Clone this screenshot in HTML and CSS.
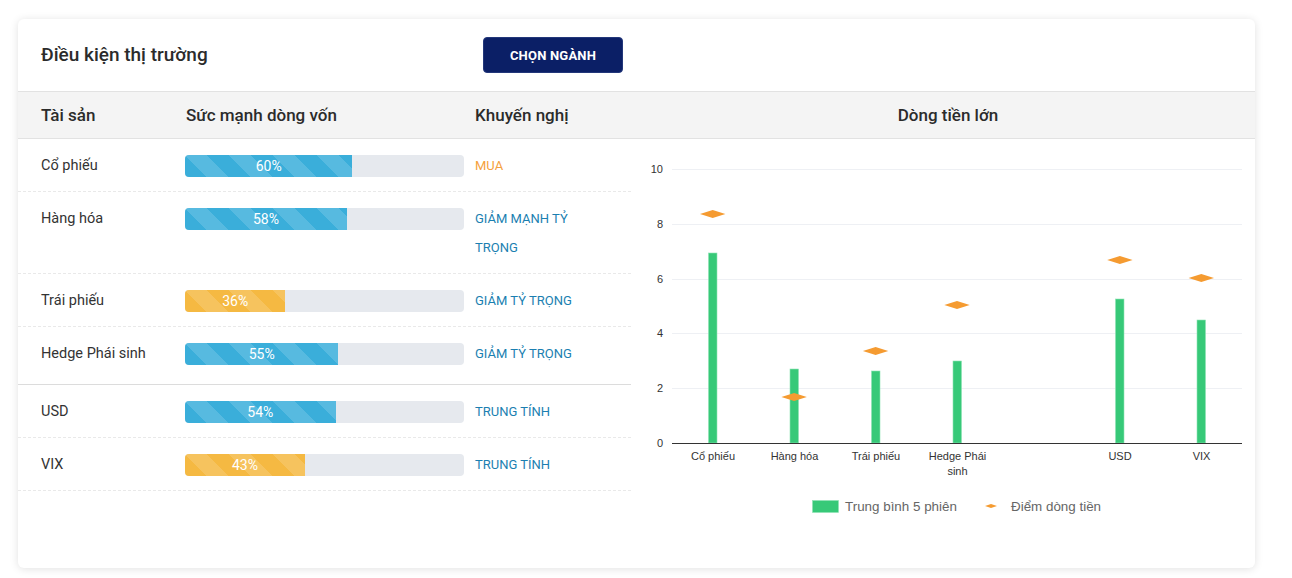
FILE: index.html
```html
<!DOCTYPE html>
<html lang="vi">
<head>
<meta charset="utf-8">
<title>Điều kiện thị trường</title>
<link rel="stylesheet" href="styles.css">
</head>
<body>
<div class="card">
  <div class="card-head">
    <h2 class="title">Điều kiện thị trường</h2>
    <button class="btn">CHỌN NGÀNH</button>
  </div>
  <div class="thead">
    <div class="th th-asset">Tài sản</div>
    <div class="th th-strength">Sức mạnh dòng vốn</div>
    <div class="th th-rec">Khuyến nghị</div>
    <div class="th th-chart">Dòng tiền lớn</div>
  </div>
  <div class="body">
    <div class="table">
      <div class="row">
        <div class="asset">Cổ phiếu</div>
        <div class="bar-cell"><div class="bar"><div class="fill blue" style="width:60%"><span>60%</span></div></div></div>
        <div class="rec buy">MUA</div>
      </div>
      <div class="row">
        <div class="asset">Hàng hóa</div>
        <div class="bar-cell"><div class="bar"><div class="fill blue" style="width:58%"><span>58%</span></div></div></div>
        <div class="rec">GIẢM MẠNH TỶ TRỌNG</div>
      </div>
      <div class="row">
        <div class="asset">Trái phiếu</div>
        <div class="bar-cell"><div class="bar"><div class="fill orange" style="width:36%"><span>36%</span></div></div></div>
        <div class="rec">GIẢM TỶ TRỌNG</div>
      </div>
      <div class="row row-group-end">
        <div class="asset">Hedge Phái sinh</div>
        <div class="bar-cell"><div class="bar"><div class="fill blue" style="width:55%"><span>55%</span></div></div></div>
        <div class="rec">GIẢM TỶ TRỌNG</div>
      </div>
      <div class="row">
        <div class="asset">USD</div>
        <div class="bar-cell"><div class="bar"><div class="fill blue" style="width:54%"><span>54%</span></div></div></div>
        <div class="rec">TRUNG TÍNH</div>
      </div>
      <div class="row">
        <div class="asset">VIX</div>
        <div class="bar-cell"><div class="bar"><div class="fill orange" style="width:43%"><span>43%</span></div></div></div>
        <div class="rec">TRUNG TÍNH</div>
      </div>
    </div>
    <div class="chart">
      <svg class="chart-svg" width="624" height="400" viewBox="0 0 624 400">
        <g class="grid">
          <line x1="41" x2="611" y1="30.5" y2="30.5"/>
          <line x1="41" x2="611" y1="85.5" y2="85.5"/>
          <line x1="41" x2="611" y1="140.5" y2="140.5"/>
          <line x1="41" x2="611" y1="194.5" y2="194.5"/>
          <line x1="41" x2="611" y1="249.5" y2="249.5"/>
        </g>
        <g class="ylab">
          <text x="32" y="34">10</text>
          <text x="32" y="89">8</text>
          <text x="32" y="144">6</text>
          <text x="32" y="198">4</text>
          <text x="32" y="253">2</text>
          <text x="32" y="308">0</text>
        </g>
        <g class="bars">
          <rect x="77.5" y="114" width="8.5" height="190"/>
          <rect x="159" y="230" width="8.5" height="74"/>
          <rect x="240.5" y="232" width="8.5" height="72"/>
          <rect x="322" y="222" width="8.5" height="82"/>
          <rect x="484.5" y="160" width="8.5" height="144"/>
          <rect x="566" y="181" width="8.5" height="123"/>
        </g>
        <line class="axis" x1="41" x2="611" y1="304.5" y2="304.5"/>
        <g class="pts">
          <polygon points="69,75 81.7,71 94.4,75 81.7,79"/>
          <polygon points="150.4,258 163.1,254 175.8,258 163.1,262"/>
          <polygon points="231.9,212 244.6,208 257.3,212 244.6,216"/>
          <polygon points="313.3,166 326,162 338.7,166 326,170"/>
          <polygon points="476.2,121 488.9,117 501.6,121 488.9,125"/>
          <polygon points="557.6,139 570.3,135 583,139 570.3,143"/>
        </g>
        <g class="xlab">
          <text x="82" y="321">Cổ phiếu</text>
          <text x="163.5" y="321">Hàng hóa</text>
          <text x="245" y="321">Trái phiếu</text>
          <text x="326.5" y="321">Hedge Phái</text>
          <text x="326.5" y="336">sinh</text>
          <text x="489" y="321">USD</text>
          <text x="570.5" y="321">VIX</text>
        </g>
        <g class="legend">
          <rect class="lg-bar" x="181.5" y="361.5" width="26" height="12"/>
          <text x="214" y="372">Trung bình 5 phiên</text>
          <polygon class="lg-pt" points="354,367 360,365 366,367 360,369"/>
          <text x="380" y="372">Điểm dòng tiền</text>
        </g>
      </svg>
    </div>
  </div>
</div>
</body>
</html>
```
FILE: styles.css
```css
* { box-sizing: border-box; }
html, body { margin: 0; padding: 0; background: #ffffff; }
body {
  font-family: Roboto, "Liberation Sans", Arial, sans-serif;
  color: #333;
  padding: 19px 37px 10px 18px;
}
.card {
  width: 1237px;
  height: 549px;
  background: #fff;
  border-radius: 6px;
  box-shadow: 0 1px 8px rgba(0, 0, 0, 0.12);
  overflow: hidden;
}
.card-head {
  height: 73px;
  display: grid;
  grid-template-columns: 442px auto;
  align-items: center;
  padding-left: 23px;
  border-bottom: 1px solid #e2e2e2;
}
.title {
  margin: 0;
  font-size: 19px;
  font-weight: 500;
  color: #2b2b2b;
  line-height: 24px;
  padding-bottom: 1px;
}
.btn {
  justify-self: start;
  width: 140px;
  height: 36px;
  margin-top: 0;
  background: #0b1f66;
  color: #fff;
  border: 1px solid #23377a;
  border-radius: 4px;
  font-family: Roboto, "Liberation Sans", sans-serif;
  font-size: 13px;
  font-weight: 700;
  letter-spacing: 0.2px;
  cursor: pointer;
}
.thead {
  height: 47px;
  background: #f4f4f4;
  border-bottom: 1px solid #e2e2e2;
  display: grid;
  grid-template-columns: 167px 290px 156px 624px;
  align-items: center;
}
.th {
  font-size: 17px;
  font-weight: 500;
  color: #2b2b2b;
}
.th-asset { padding-left: 23px; }
.th-strength { padding-left: 1px; }
.th-chart { text-align: center; padding-left: 10px; }

.body {
  display: grid;
  grid-template-columns: 613px 624px;
}
.table { display: flex; flex-direction: column; }
.row {
  display: grid;
  grid-template-columns: 167px 290px 156px;
  align-items: start;
  padding: 12px 0 11px;
  border-bottom: 1px dashed #e9e9e9;
  line-height: 29px;
}
.row-group-end {
  padding-bottom: 16px;
  border-bottom: 1px solid #dcdcdc;
}
.asset {
  padding-left: 23px;
  font-size: 14.5px;
  color: #333;
}
.bar-cell {
  height: 29px;
  display: flex;
  align-items: center;
}
.bar {
  width: 279px;
  height: 22px;
  background: #e6e9ee;
  border-radius: 4px;
  overflow: hidden;
}
.fill {
  height: 100%;
  display: flex;
  align-items: center;
  justify-content: center;
  color: #fff;
  font-size: 14px;
  font-weight: 400;
  background-size: 44px 44px;
  background-image: linear-gradient(45deg,
    rgba(255,255,255,0.15) 25%, transparent 25%, transparent 50%,
    rgba(255,255,255,0.15) 50%, rgba(255,255,255,0.15) 75%, transparent 75%, transparent);
}
.fill span { line-height: 22px; }
.fill.blue { background-color: #3aaeda; }
.fill.orange { background-color: #f5b942; }
.rec {
  font-size: 13px;
  color: #1b7fb1;
  padding-right: 28px;
}
.rec.buy { color: #f5a13c; }

.chart { position: relative; }
.chart-svg { display: block; font-family: "Liberation Sans", Arial, sans-serif; }
.grid line { stroke: #eef0f4; stroke-width: 1; }
.axis { stroke: #333; stroke-width: 1; }
.ylab text { font-size: 11px; fill: #333; text-anchor: end; }
.xlab text { font-size: 11px; fill: #333; text-anchor: middle; }
.bars rect { fill: #37c978; stroke: #8fe3b4; stroke-width: 0.6; }
.pts polygon { fill: #f59b31; }
.lg-bar { fill: #37c978; stroke: #8fe3b4; stroke-width: 0.6; }
.lg-pt { fill: #f59b31; }
.legend text { font-size: 13.4px; fill: #666; }
```
